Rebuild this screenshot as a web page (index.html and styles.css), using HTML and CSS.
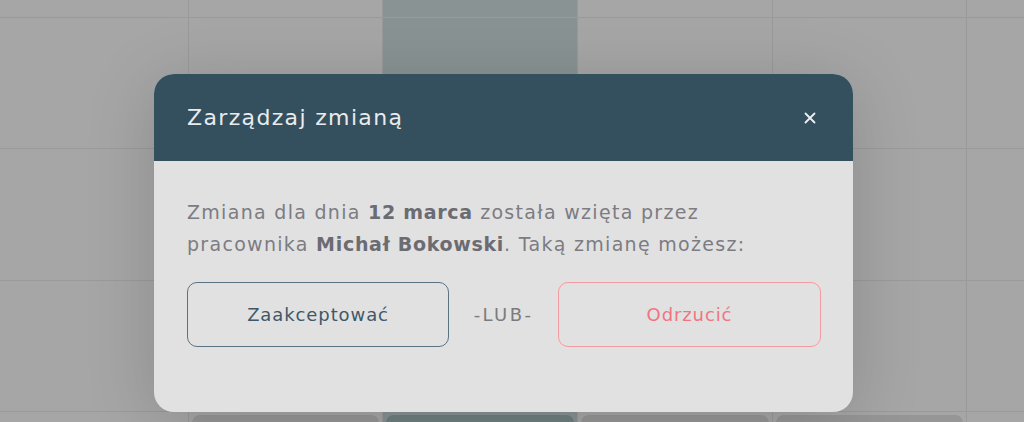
FILE: index.html
```html
<!DOCTYPE html>
<html lang="pl">
<head>
<meta charset="utf-8">
<link rel="stylesheet" href="styles.css">
</head>
<body>
<div class="calendar">
  <div class="cell"></div><div class="cell"></div><div class="cell teal"></div><div class="cell"></div><div class="cell"></div><div class="cell"></div>
  <div class="cell"></div><div class="cell"></div><div class="cell teal"></div><div class="cell"></div><div class="cell"></div><div class="cell"></div>
  <div class="cell"></div><div class="cell"></div><div class="cell teal"></div><div class="cell"></div><div class="cell"></div><div class="cell"></div>
  <div class="cell"></div><div class="cell"></div><div class="cell teal"></div><div class="cell"></div><div class="cell"></div><div class="cell"></div>
  <div class="cell"></div><div class="cell"><div class="card"></div></div><div class="cell teal"><div class="card card-teal"></div></div><div class="cell"><div class="card"></div></div><div class="cell"><div class="card"></div></div><div class="cell"></div>
</div>

<div class="modal">
  <div class="modal-header">
    <h2 class="modal-title">Zarządzaj zmianą</h2>
    <button class="close" aria-label="Zamknij">
      <svg width="12" height="12" viewBox="0 0 12 12"><path d="M1.5 1.5 L10.5 10.5 M10.5 1.5 L1.5 10.5" stroke="#eef0f1" stroke-width="1.8" stroke-linecap="round"/></svg>
    </button>
  </div>
  <div class="modal-body">
    <p class="message">Zmiana dla dnia <strong>12 marca</strong> została wzięta przez<br>pracownika <strong>Michał Bokowski</strong>. Taką zmianę możesz:</p>
    <div class="actions">
      <button class="btn btn-accept">Zaakceptować</button>
      <span class="or">-LUB-</span>
      <button class="btn btn-reject">Odrzucić</button>
    </div>
  </div>
</div>
</body>
</html>
```

FILE: styles.css
```css
html, body {
  margin: 0;
  padding: 0;
  width: 1024px;
  height: 422px;
  overflow: hidden;
  font-family: "DejaVu Sans", "Liberation Sans", sans-serif;
}

.calendar {
  display: grid;
  grid-template-columns: 188px 193px 194px 194px 193px 1fr;
  grid-template-rows: 17px 130px 131px 130px 1fr;
  gap: 1px;
  background: #9a9a9a;
  width: 1024px;
  height: 422px;
}

.cell {
  background: #a6a6a6;
  padding: 3px 3px 0;
}

.cell.teal {
  background: #899393;
}

.card {
  height: 20px;
  border-radius: 8px;
  background: #969696;
}

.card-teal {
  background: #6f7f80;
}

.modal {
  position: absolute;
  left: 154px;
  top: 74px;
  width: 699px;
  height: 338px;
  border-radius: 20px;
  overflow: hidden;
  background: #e1e1e1;
  box-shadow: 0 10px 70px rgba(0, 0, 0, 0.16);
  display: flex;
  flex-direction: column;
}

.modal-header {
  height: 87px;
  flex: none;
  background: #34505f;
  display: flex;
  align-items: center;
  justify-content: space-between;
  padding: 0 37px 0 33px;
}

.modal-title {
  margin: 0;
  font-size: 22px;
  font-weight: 400;
  color: #e9ebec;
  letter-spacing: 1.35px;
}

.close {
  border: 0;
  background: none;
  padding: 0;
  width: 12px;
  height: 12px;
  display: flex;
}

.modal-body {
  padding: 35px 32px 0 33px;
}

.message {
  margin: 0;
  font-size: 19px;
  line-height: 32px;
  color: #7c7c82;
  letter-spacing: 1.3px;
}

.message strong {
  font-weight: 700;
  color: #6b6b72;
  letter-spacing: 0.7px;
}

.actions {
  margin-top: 22px;
  display: grid;
  grid-template-columns: 262px 1fr 263px;
  align-items: center;
}

.btn {
  height: 65px;
  border-radius: 10px;
  background: transparent;
  font-family: inherit;
  font-size: 18px;
  letter-spacing: 0.9px;
  cursor: pointer;
}

.btn-accept {
  border: 1px solid #5a7382;
  color: #3f5868;
}

.btn-reject {
  border: 1px solid #f39aa2;
  color: #f27480;
}

.or {
  text-align: center;
  font-size: 18px;
  letter-spacing: 2.4px;
  color: #7b7b7f;
}
```
